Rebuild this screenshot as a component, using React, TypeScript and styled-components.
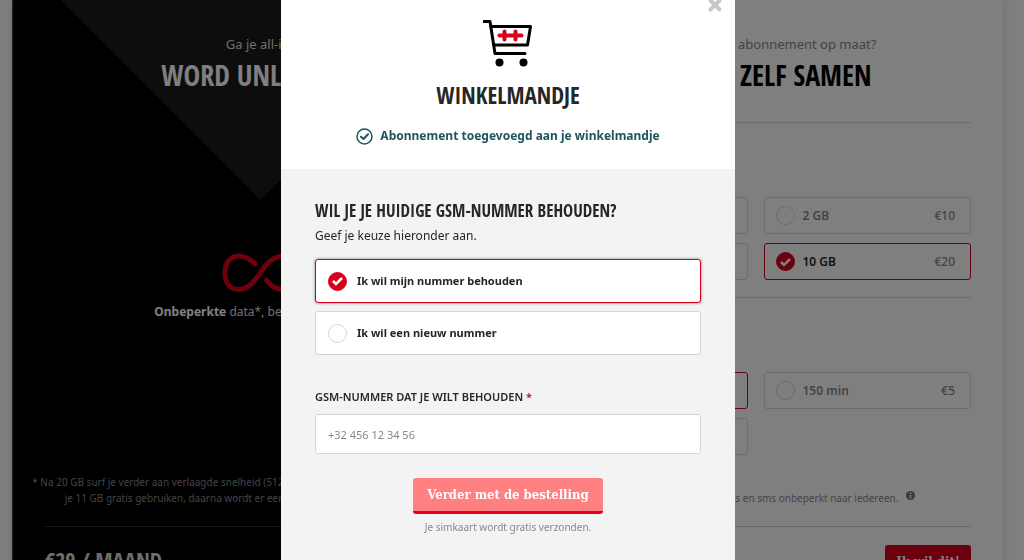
import React from 'react';
import styled, { createGlobalStyle, css } from 'styled-components';

const display = `"Open Sans Condensed", "Roboto Condensed", "Open Sans", sans-serif`;
const body = `"Noto Sans", "Open Sans", sans-serif`;
const slab = `"DejaVu Serif Condensed", "DejaVu Serif", serif`;
const red = '#d6001c';

const GlobalStyle = createGlobalStyle`
  *, *::before, *::after { box-sizing: border-box; }
  html, body, #root { height: 100%; }
  body { margin: 0; background: #fff; font-family: ${body}; font-size: 12px; line-height: 20px; color: #262626; overflow: hidden; }
  h1, h2, h3, p { margin: 0; }
  button, input { font-family: inherit; }
  fieldset { border: 0; margin: 0; padding: 0; min-width: 0; }
`;

const Page = styled.div`
  height: 100%;
  overflow: hidden;
  padding: 0 21px 0 12px;
`;

const Card = styled.main`
  display: grid;
  grid-template-columns: repeat(2, minmax(0, 1fr));
  min-height: 605px;
  border-left: 1px solid #444;
  box-shadow: 0 0 8px rgba(0, 0, 0, 0.15);
`;

const Panel = styled.section<{ $dark?: boolean }>`
  position: relative;
  display: flex;
  flex-direction: column;
  padding: 34px 32px 24px;
  background: #fff;
  ${(p) =>
    p.$dark &&
    css`
      background: #000;
      color: #ddd;
      &::before {
        content: '';
        position: absolute;
        top: 0;
        left: 50%;
        width: 400px;
        height: 200px;
        margin-left: -200px;
        background: #1a1a1a;
        clip-path: polygon(0 0, 100% 0, 50% 100%);
      }
    `}
`;

const PanelHead = styled.header<{ $dark?: boolean }>`
  position: relative;
  flex: none;
  height: 89px;
  text-align: center;
  color: ${(p) => (p.$dark ? '#ddd' : '#888')};
  border-bottom: 1px solid ${(p) => (p.$dark ? 'transparent' : '#d8d8d8')};
  p { font-size: 13px; line-height: 20px; white-space: nowrap; }
`;

const PanelTitle = styled.h2<{ $dark?: boolean }>`
  font: bold 28px/42px ${display};
  color: ${(p) => (p.$dark ? '#fff' : '#000')};
  white-space: nowrap;
`;

const Unlimited = styled.div`
  display: flex;
  flex-direction: column;
  align-items: center;
  gap: 9px;
  padding-top: 130px;
  white-space: nowrap;
  strong { font-weight: 700; color: #fff; }
`;

const Spacer = styled.div`
  flex: 1;
`;

const Footnote = styled.p`
  display: flex;
  flex-direction: column;
  justify-content: flex-end;
  height: 32px;
  margin: 0 -24px 20px;
  font-size: 10px;
  line-height: 16px;
  text-align: center;
  white-space: nowrap;
  color: #888;
  svg { margin-left: 8px; vertical-align: 2px; }
`;

const PriceRow = styled.div<{ $dark?: boolean }>`
  display: flex;
  justify-content: space-between;
  align-items: flex-start;
  padding-top: 18px;
  border-top: 1px solid ${(p) => (p.$dark ? '#333' : '#d0d0d0')};
`;

const Price = styled.strong`
  font: bold 22px/28px ${display};
`;

const OrderButton = styled.button`
  height: 36px;
  padding: 0 11px;
  border: 0;
  border-bottom: 3px solid #a00014;
  border-radius: 3px;
  background: ${red};
  color: #fff;
  font: bold 13px/32px ${slab};
`;

const PlanGroup = styled.fieldset`
  display: flow-root;
  height: 174px;
  & + & { border-top: 1px solid #d8d8d8; }
`;

const GroupTitle = styled.h3`
  margin: 24px 0 20px;
  font: bold 20px/30px ${display};
`;

const PlanGrid = styled.div`
  display: grid;
  grid-template-columns: 1fr 1fr;
  gap: 9px 16px;
`;

const PlanOption = styled.label<{ $on?: boolean }>`
  display: flex;
  align-items: center;
  gap: 8px;
  height: 37px;
  padding: 0 15px 0 11px;
  border: 1px solid ${(p) => (p.$on ? red : '#dadada')};
  border-radius: 3px;
  font-size: 12px;
  font-weight: 600;
  color: ${(p) => (p.$on ? '#262626' : '#888')};
`;

const PlanPrice = styled.span`
  margin-left: auto;
  font-weight: 500;
  color: #888;
`;

const RadioBox = styled.span`
  display: grid;
  place-items: center;
  width: 19px;
  height: 19px;
  > * { grid-area: 1 / 1; }
  svg { pointer-events: none; }
`;

const RadioInput = styled.input`
  appearance: none;
  width: 19px;
  height: 19px;
  margin: 0;
  border: 1px solid #d8d8d8;
  border-radius: 50%;
  background: #fff;
  &:checked { border-color: ${red}; background: ${red}; }
`;

const Overlay = styled.div`
  position: fixed;
  inset: 0;
  display: flex;
  justify-content: center;
  padding-right: 8px;
  background: rgba(0, 0, 0, 0.5);
`;

const Modal = styled.div`
  position: relative;
  display: flex;
  flex-direction: column;
  width: 454px;
  max-width: 100%;
  min-height: 100%;
  background: #f3f3f3;
`;

const ModalHead = styled.header`
  display: flex;
  flex-direction: column;
  align-items: center;
  padding: 19px 34px 23px;
  background: #fff;
`;

const ModalTitle = styled.h1`
  margin: 8px 0 11px;
  font: bold 23px/40px ${display};
`;

const Added = styled.p`
  display: flex;
  align-items: center;
  gap: 7px;
  font-weight: 700;
  color: #1f555c;
  white-space: nowrap;
`;

const CloseButton = styled.button`
  position: absolute;
  top: -3px;
  right: 12px;
  width: 16px;
  height: 16px;
  padding: 0;
  border: 0;
  background: none;
  svg { display: block; }
`;

const Form = styled.form`
  display: flex;
  flex-direction: column;
  padding: 28px 34px 24px;
`;

const Question = styled.h2`
  margin-bottom: 1px;
  font: bold 17px/28px ${display};
  white-space: nowrap;
`;

const Choices = styled.fieldset`
  display: grid;
  gap: 8px;
  margin: 13px 0 32px;
`;

const Choice = styled.label<{ $on?: boolean }>`
  display: flex;
  align-items: center;
  gap: 10px;
  height: 44px;
  padding: 0 12px;
  border: 1px solid ${(p) => (p.$on ? red : '#d4d4d4')};
  border-radius: 3px;
  background: #fff;
  box-shadow: ${(p) => (p.$on ? '0 0 3px rgba(0, 0, 0, 0.5)' : 'none')};
  font-size: 11px;
  font-weight: 700;
`;

const FieldLabel = styled.label`
  margin-bottom: 7px;
  font-size: 11px;
  font-weight: 600;
  text-transform: uppercase;
  span { color: ${red}; }
`;

const PhoneInput = styled.input`
  width: 100%;
  height: 40px;
  padding: 0 12px;
  border: 1px solid #d4d4d4;
  border-radius: 3px;
  background: #fff;
  font-size: 11px;
  &::placeholder { color: #888; opacity: 1; }
`;

const SubmitButton = styled.button`
  align-self: center;
  height: 36px;
  margin: 24px 0 3px;
  padding: 0 14px;
  border: 0;
  border-bottom: 3px solid #e2001a;
  border-radius: 3px;
  background: #ff8080;
  color: #fff;
  font: bold 13px/32px ${slab};
`;

const Note = styled.p`
  font-size: 10px;
  line-height: 20px;
  text-align: center;
  color: #888;
`;

const InfinityIcon = () => (
  <svg width="78" height="40" viewBox="0 0 78 40" fill="none" stroke="#da0018" strokeWidth="5" strokeLinecap="round" aria-hidden="true">
    <path d="M33 11C28 6 22 3 16.500 3C8 3 3 10 3 20S8 36.500 16.500 36.500C27 36.500 34 26 39 19C45 9 52 3 61.500 3C70 3 75 10 75 20S70 36.500 61.500 36.500C54 36.500 48 32 44.500 27" />
  </svg>
);

const CartIcon = () => (
  <svg width="50" height="48" viewBox="0 0 50 48" fill="none" strokeLinecap="round" strokeLinejoin="round" aria-hidden="true">
    <g stroke="#000" strokeWidth="3">
      <path d="M1 2.500H7L12 34.500H42" />
      <path d="M8 7.500H47.500L44.500 26H11" />
    </g>
    <path d="M16.500 16.500H38.500" stroke="#d6001c" strokeWidth="4" />
    <path d="M21.500 12.500V20.500M32.500 12.500V20.500" stroke="#d6001c" strokeWidth="4" />
    <circle cx="16.500" cy="43.500" r="4" fill="#000" />
    <circle cx="40.500" cy="43.500" r="4" fill="#000" />
  </svg>
);

const Tick = () => (
  <svg width="11" height="10" viewBox="0 0 11 10" fill="none" stroke="#fff" strokeWidth="2.500" aria-hidden="true">
    <path d="M1 5L4 8L10 2" />
  </svg>
);

const Radio = ({ name, on }: { name: string; on?: boolean }) => (
  <RadioBox>
    <RadioInput type="radio" name={name} defaultChecked={on} />
    {on && <Tick />}
  </RadioBox>
);

type Plan = { label: string; price: string; on?: boolean };

const dataPlans: Plan[] = [
  { label: '1 GB', price: '€5' },
  { label: '2 GB', price: '€10' },
  { label: '5 GB', price: '€15' },
  { label: '10 GB', price: '€20', on: true },
];

const callPlans: Plan[] = [
  { label: '60 min', price: '€2', on: true },
  { label: '150 min', price: '€5' },
  { label: '300 min', price: '€10' },
];

const Plans = ({ title, name, plans }: { title: string; name: string; plans: Plan[] }) => (
  <PlanGroup>
    <GroupTitle>{title}</GroupTitle>
    <PlanGrid>
      {plans.map((plan) => (
        <PlanOption key={plan.label} $on={plan.on}>
          <Radio name={name} on={plan.on} />
          {plan.label}
          <PlanPrice>{plan.price}</PlanPrice>
        </PlanOption>
      ))}
    </PlanGrid>
  </PlanGroup>
);

export default function App() {
  return (
    <>
      <GlobalStyle />
      <Page>
        <Card>
          <Panel $dark>
            <PanelHead $dark>
              <p>Ga je all-in?</p>
              <PanelTitle $dark>WORD UNLIMITED</PanelTitle>
            </PanelHead>
            <Unlimited>
              <InfinityIcon />
              <p>
                <strong>Onbeperkte</strong> data*, bellen en sms'jes.
              </p>
            </Unlimited>
            <Spacer />
            <Footnote>
              <span>* Na 20 GB surf je verder aan verlaagde snelheid (512 kbps). In de landen van de EU kan je steeds</span>
              <span>je 11 GB gratis gebruiken, daarna wordt er een extra bijdrage per MB aangerekend.</span>
            </Footnote>
            <PriceRow $dark>
              <Price>€29 / MAAND</Price>
              <OrderButton type="button">Ik wil dit!</OrderButton>
            </PriceRow>
          </Panel>
          <Panel>
            <PanelHead>
              <p>Liever een eigen abonnement op maat?</p>
              <PanelTitle>STEL HET ZELF SAMEN</PanelTitle>
            </PanelHead>
            <Plans title="DATA" name="data" plans={dataPlans} />
            <Plans title="BELLEN" name="call" plans={callPlans} />
            <Spacer />
            <Footnote>
              <span>
                Bel in het weekend, 's middags en sms onbeperkt naar iedereen.
                <svg width="9" height="9" viewBox="0 0 9 9" aria-hidden="true">
                  <circle cx="4.500" cy="4.500" r="4.500" fill="#777" />
                  <path d="M4.500 1.500V3M4.500 4V7.500" stroke="#fff" strokeWidth="1.500" />
                </svg>
              </span>
            </Footnote>
            <PriceRow>
              <Price>€22 / MAAND</Price>
              <OrderButton type="button">Ik wil dit!</OrderButton>
            </PriceRow>
          </Panel>
        </Card>
      </Page>
      <Overlay>
        <Modal role="dialog" aria-modal="true" aria-labelledby="cart-title">
          <ModalHead>
            <CartIcon />
            <ModalTitle id="cart-title">WINKELMANDJE</ModalTitle>
            <Added>
              <svg width="17" height="17" viewBox="0 0 17 17" fill="none" stroke="#1f555c" strokeWidth="1.500" strokeLinecap="round" strokeLinejoin="round" aria-hidden="true">
                <circle cx="8.500" cy="8.500" r="7.500" />
                <path d="M5 8.700L7.500 11L12 6.300" strokeWidth="2" />
              </svg>
              Abonnement toegevoegd aan je winkelmandje
            </Added>
          </ModalHead>
          <CloseButton type="button" aria-label="Sluiten">
            <svg width="16" height="16" viewBox="0 0 16 16" stroke="#c8c8c8" strokeWidth="4" strokeLinecap="round" aria-hidden="true">
              <path d="M3.500 3.500L12.500 12.500M12.500 3.500L3.500 12.500" />
            </svg>
          </CloseButton>
          <Form>
            <Question>WIL JE JE HUIDIGE GSM-NUMMER BEHOUDEN?</Question>
            <p>Geef je keuze hieronder aan.</p>
            <Choices aria-label="Gsm-nummer">
              <Choice $on>
                <Radio name="number" on />
                Ik wil mijn nummer behouden
              </Choice>
              <Choice>
                <Radio name="number" />
                Ik wil een nieuw nummer
              </Choice>
            </Choices>
            <FieldLabel htmlFor="phone">
              Gsm-nummer dat je wilt behouden <span>*</span>
            </FieldLabel>
            <PhoneInput id="phone" type="tel" placeholder="+32 456 12 34 56" />
            <SubmitButton type="button">Verder met de bestelling</SubmitButton>
            <Note>Je simkaart wordt gratis verzonden.</Note>
          </Form>
        </Modal>
      </Overlay>
    </>
  );
}
